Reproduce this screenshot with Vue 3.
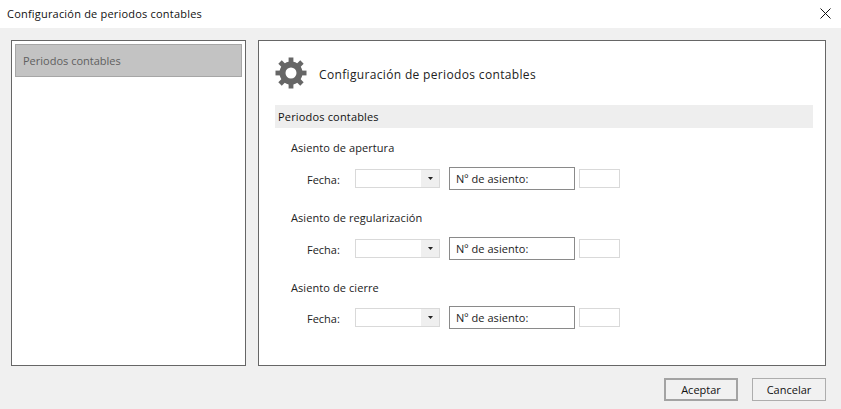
<template>
  <div class="dialog">
    <div class="titlebar">
      <span>Configuración de periodos contables</span>
      <svg class="close" width="11" height="11" viewBox="0 0 11 11">
        <path d="M0.5 0.5L10.5 10.5M10.5 0.5L0.5 10.5" stroke="#111" stroke-width="1" fill="none" />
      </svg>
    </div>
    <div class="body">
      <div class="panels">
        <div class="sidebar">
          <div class="sidebar__item">Periodos contables</div>
        </div>
        <div class="main">
          <div class="main__header">
            <svg class="gear" width="32" height="32" viewBox="0 0 32 32">
              <circle cx="16" cy="16" r="8.5" fill="none" stroke="#666" stroke-width="6" />
              <rect
                v-for="angle in teeth"
                :key="angle"
                x="13.6"
                y="0.5"
                width="4.8"
                height="6"
                fill="#666"
                :transform="`rotate(${angle} 16 16)`"
              />
            </svg>
            <span class="main__title">Configuración de periodos contables</span>
          </div>
          <div class="section">Periodos contables</div>
          <div v-for="group in groups" :key="group" class="group">
            <div class="group__label">{{ group }}</div>
            <div class="row">
              <span class="row__label">Fecha:</span>
              <div class="select">
                <div class="select__arrow"></div>
              </div>
              <div class="number">Nº de asiento:</div>
              <div class="small"></div>
            </div>
          </div>
        </div>
      </div>
      <div class="footer">
        <button class="btn btn--default">Aceptar</button>
        <button class="btn">Cancelar</button>
      </div>
    </div>
  </div>
</template>

<script setup>
const groups = ["Asiento de apertura", "Asiento de regularización", "Asiento de cierre"];
const teeth = [0, 45, 90, 135, 180, 225, 270, 315];
</script>

<style>
html,
body {
  margin: 0;
  background: #f0f0f0;
}
</style>

<style scoped>
.dialog {
  width: 841px;
  height: 409px;
  display: flex;
  flex-direction: column;
  font-family: "Open Sans", "Noto Sans", sans-serif;
  font-size: 11px;
  color: #222;
  overflow: hidden;
}
.titlebar {
  height: 28px;
  flex: none;
  background: #fff;
  display: flex;
  align-items: center;
  justify-content: space-between;
  padding: 0 10px 2px 7px;
  box-sizing: border-box;
  color: #111;
  letter-spacing: 0.2px;
}
.close {
  margin-top: 1px;
}
.body {
  flex: 1;
  background: #f0f0f0;
  padding: 12px 15px 8px 11px;
  display: flex;
  flex-direction: column;
}
.panels {
  display: flex;
  gap: 12px;
  height: 326px;
}
.sidebar {
  width: 235px;
  box-sizing: border-box;
  background: #fff;
  border: 1px solid #666;
  padding: 3px;
}
.sidebar__item {
  height: 33px;
  box-sizing: border-box;
  background: #c3c3c3;
  border: 1px solid #a6a6a6;
  padding: 0 7px;
  display: flex;
  align-items: center;
  color: #5f5f5f;
}
.main {
  flex: 1;
  box-sizing: border-box;
  background: #fff;
  border: 1px solid #666;
  padding: 16px 12px 0 16px;
}
.main__header {
  display: flex;
  align-items: center;
  gap: 12px;
  height: 32px;
}
.main__title {
  font-size: 12px;
  color: #222;
  letter-spacing: 0.34px;
  padding-top: 2px;
}
.section {
  margin-top: 16px;
  height: 23px;
  background: #eee;
  padding-left: 3px;
  display: flex;
  align-items: center;
  color: #111;
  letter-spacing: 0.17px;
}
.group {
  margin-left: 16px;
  height: 69.5px;
}
.group__label {
  padding-top: 12px;
  height: 27px;
  box-sizing: border-box;
  line-height: 15px;
  letter-spacing: 0.08px;
}
.group:last-child .group__label {
  padding-top: 13px;
}
.row {
  display: flex;
  align-items: center;
  height: 23px;
  margin-top: 12px;
}
.row__label {
  width: 47px;
  margin-left: 16px;
  margin-right: 1px;
  padding-top: 2px;
  flex: none;
}
.select {
  width: 85px;
  height: 19px;
  box-sizing: border-box;
  border: 1px solid #d9d9d9;
  background: #fff;
  display: flex;
  justify-content: flex-end;
}
.select__arrow {
  width: 18px;
  background: #efefef url("data:image/svg+xml,%3Csvg xmlns='http://www.w3.org/2000/svg' width='5' height='3'%3E%3Cpath d='M0 0h5L2.5 3z' fill='%23222'/%3E%3C/svg%3E") center no-repeat;
}
.number {
  width: 126px;
  height: 23px;
  box-sizing: border-box;
  border: 1px solid #8a8a8a;
  background: #fff;
  margin-left: 9px;
  padding: 0 6px;
  display: flex;
  align-items: center;
  letter-spacing: 0.07px;
}
.small {
  width: 41px;
  height: 19px;
  box-sizing: border-box;
  border: 1px solid #d9d9d9;
  background: #fff;
  margin-left: 4px;
}
.footer {
  display: flex;
  justify-content: flex-end;
  gap: 14px;
  margin-top: 12px;
}
.btn {
  width: 74px;
  height: 23px;
  box-sizing: border-box;
  border: 1px solid #adadad;
  background: #f1f1f1;
  font: inherit;
  color: #111;
  padding: 0;
}
.btn--default {
  border: 2px solid #a3a3a3;
}
</style>
